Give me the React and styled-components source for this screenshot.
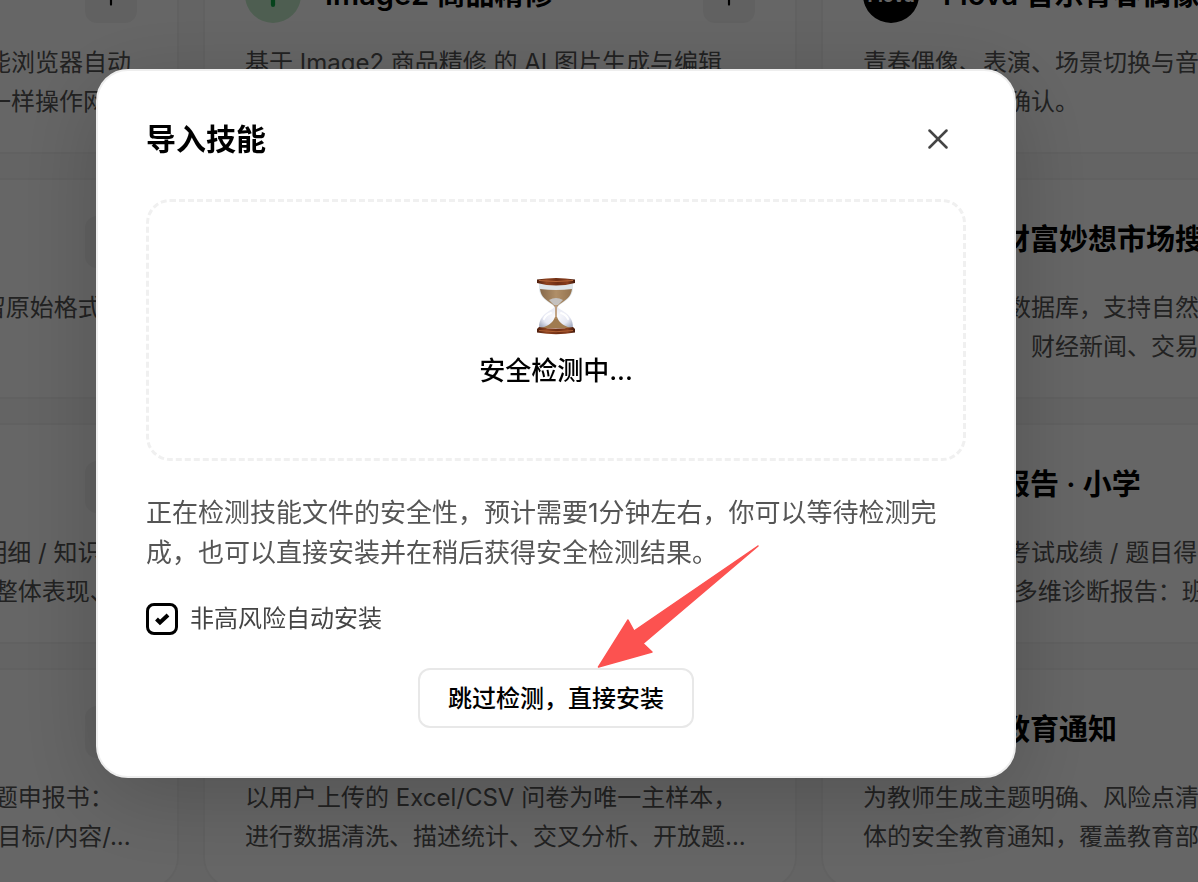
import React, { useState } from "react";
import styled, { createGlobalStyle } from "styled-components";
import { ArrowUp, Plus, X } from "lucide-react";

const skills = [
    {
        name: "浏览器自动化",
        lines: ["面向日常办公场景所提供的一套智能浏览器自动", "化操作，让助手可以像真人用户们一样操作网页"],
    },
    {
        name: "Image2 商品精修",
        badge: "arrow",
        lines: ["基于 Image2 商品精修 的 AI 图片生成与编辑", "支持商品主图与细节图"],
    },
    {
        name: "Flova 音乐青春偶像唱跳",
        badge: "flova",
        lines: ["青春偶像、表演、场景切换与音乐氛围的智能", "创作分镜逐一确认。"],
    },
    {
        name: "文档翻译",
        lines: ["将 DOC 文档翻译为目标语言并保留原始格式"],
    },
    {
        name: "数据整理",
        lines: ["整理表格数据"],
    },
    {
        name: "东方财富妙想市场搜索",
        lines: ["基于东方财富数据库，支持自然语言查询行情", "与研报公告等，财经新闻、交易数据等内容"],
    },
    {
        name: "学情报告 · 中学",
        lines: ["上传每次考试成绩 / 各题目得分 / 明细 / 知识", "点等，生成多维诊断的学情报告： 整体表现、"],
    },
    {
        name: "课堂设计",
        lines: ["生成课堂教学设计"],
    },
    {
        name: "学情报告 · 小学",
        lines: ["上传全班级的考试成绩 / 题目得分 / 知识点", "一键输出学情 多维诊断报告：班级整体表现"],
    },
    {
        name: "课题申报",
        lines: ["面向教师的课题研究， 生成完整课题申报书：", "选题依据/研究综述/研究方法/研究/目标/内容/..."],
    },
    {
        name: "问卷分析",
        lines: ["以用户上传的 Excel/CSV 问卷为唯一主样本，", "进行数据清洗、描述统计、交叉分析、开放题..."],
    },
    {
        name: "安全教育通知",
        lines: ["为教师生成主题明确、风险点清晰、措施具", "体的安全教育通知，覆盖教育部要求的内容"],
    },
];

function Badge({ kind }) {
    if (kind === "arrow") {
        return (
            <BadgeCircle $bg="#c4eccb">
                <ArrowUp size={34} strokeWidth={3} color="#10a848" />
            </BadgeCircle>
        );
    }
    if (kind === "flova") {
        return <BadgeCircle $bg="#000">Flova</BadgeCircle>;
    }
    return <BadgeCircle $bg="#e8eefc" />;
}

function SkillCard({ skill }) {
    return (
        <Card>
            <CardHeader>
                <Badge kind={skill.badge} />
                <CardTitle>{skill.name}</CardTitle>
                <AddButton aria-label={`添加 ${skill.name}`}>
                    <Plus size={26} strokeWidth={2} />
                </AddButton>
            </CardHeader>
            <CardText>
                {skill.lines.map((line) => (
                    <span key={line}>{line}</span>
                ))}
            </CardText>
        </Card>
    );
}

function Hourglass() {
    return (
        <svg width="64" height="64" viewBox="0 0 64 64" aria-hidden="true">
            <defs>
                <linearGradient id="wood" x1="0" x2="1" y1="0" y2="0">
                    <stop offset="0" stopColor="#4e1e0d" />
                    <stop offset="0.25" stopColor="#8f4420" />
                    <stop offset="0.55" stopColor="#6f2e14" />
                    <stop offset="0.8" stopColor="#8a3f1e" />
                    <stop offset="1" stopColor="#42180a" />
                </linearGradient>
                <linearGradient id="sand" x1="0" x2="1" y1="0" y2="0">
                    <stop offset="0" stopColor="#86684a" />
                    <stop offset="0.5" stopColor="#b08f68" />
                    <stop offset="1" stopColor="#94734f" />
                </linearGradient>
                <radialGradient id="glass" cx="0.5" cy="0.5" r="0.6">
                    <stop offset="0" stopColor="#fbfbfe" />
                    <stop offset="0.65" stopColor="#e6e8f3" />
                    <stop offset="1" stopColor="#a9b0c4" />
                </radialGradient>
            </defs>
            <path d="M15 12h34v5c0 8-6 12-12 16-3 2-4 3-4 6h-2c0-3-1-4-4-6-6-4-12-8-12-16z" fill="#dfe6ea" />
            <path d="M16 18q16 2 32 0c-1 8-6 11-12 15-2 1-3 3-3 6h-2c0-3-1-5-3-6-6-4-11-7-12-15z" fill="url(#sand)" />
            <path d="M25 29q7-4 14 0l-5 5h-4z" fill="#c9cbd0" opacity="0.85" />
            <path d="M31 34h2c0 3 3 4 6 6 6 4 10 8 10 17H15c0-9 4-13 10-17 3-2 6-3 6-6z" fill="url(#glass)" />
            <path d="M31 46h2c2 6 7 9 14 11H17c7-2 12-5 14-11z" fill="#a07b50" />
            <path d="M32 34v14" stroke="#b08a60" strokeWidth="1.500" />
            <path d="M20 48c1-3 4-5 7-6M44 48c-1-3-4-5-7-6" stroke="#fff" strokeWidth="2" fill="none" strokeLinecap="round" />
            <path d="M13 8.500q19-3 38 0v3.500q-19 5-38 0z" fill="url(#wood)" />
            <path d="M15 9.500q17 2 34 0" stroke="#b8683a" strokeWidth="1" fill="none" />
            <path d="M15 56q17 3 34 0l2 2v3.500q-19 3.500-38 0V58z" fill="url(#wood)" />
            <path d="M15 59.500q17 2.500 34 0" stroke="#b06034" strokeWidth="1" fill="none" />
        </svg>
    );
}

function ImportDialog() {
    const [autoInstall, setAutoInstall] = useState(true);

    return (
        <Dialog role="dialog" aria-modal="true" aria-labelledby="import-title">
            <DialogHeader>
                <DialogTitle id="import-title">导入技能</DialogTitle>
                <CloseButton aria-label="关闭">
                    <X size={34} strokeWidth={1.8} />
                </CloseButton>
            </DialogHeader>
            <DropZone>
                <Hourglass />
                <Status>安全检测中...</Status>
            </DropZone>
            <Notice>
                正在检测技能文件的安全性，预计需要1分钟左右，你可以等待检测完成，也可以直接安装并在稍后获得安全检测结果。
            </Notice>
            <Option>
                <Checkbox
                    type="checkbox"
                    checked={autoInstall}
                    onChange={(e) => setAutoInstall(e.target.checked)}
                />
                非高风险自动安装
            </Option>
            <Actions>
                <SkipButton>跳过检测，直接安装</SkipButton>
                <Pointer viewBox="0 0 162 124" aria-hidden="true">
                    <path
                        d="M161 1 37 86 31 75 1.500 122 55 107 46 98.500Z"
                        fill="#fc5250"
                        stroke="#fc5250"
                        strokeWidth="1.500"
                        strokeLinejoin="round"
                    />
                </Pointer>
            </Actions>
        </Dialog>
    );
}

function App() {
    return (
        <>
            <GlobalStyle />
            <Page>
                <Board>
                    {skills.map((skill, index) => (
                        <SkillCard skill={skill} key={index} />
                    ))}
                </Board>
            </Page>
            <Backdrop>
                <ImportDialog />
            </Backdrop>
        </>
    );
}

const GlobalStyle = createGlobalStyle`
    * {
        box-sizing: border-box;
    }
    body {
        margin: 0;
        background: #f9f9f9;
        color: #000;
        font-family: Inter, "Noto Sans CJK SC", sans-serif;
    }
    button {
        font-family: inherit;
        cursor: pointer;
    }
    h1, h2, p {
        margin: 0;
    }
`;

const Page = styled.main`
    height: 100vh;
    overflow: hidden;
`;

/* the board is scrolled towards its middle column */
const Board = styled.div`
    display: grid;
    grid-template-columns: repeat(3, 594px);
    grid-auto-rows: 221px;
    gap: 24px;
    margin: -67px 0 0 -415px;
`;

const Card = styled.article`
    background: #fff;
    border: 2px solid #f3f3f3;
    border-radius: 32px;
    padding: 32px 40px;
    overflow: hidden;
`;

const CardHeader = styled.div`
    display: flex;
    align-items: center;
    gap: 24px;
    height: 56px;
`;

const BadgeCircle = styled.div`
    flex: none;
    display: flex;
    align-items: center;
    justify-content: center;
    width: 56px;
    height: 56px;
    border-radius: 50%;
    background: ${(props) => props.$bg};
    color: #fff;
    font-size: 18px;
    font-weight: 700;
`;

const CardTitle = styled.h2`
    flex: 1;
    font-size: 29px;
    line-height: 40px;
    font-weight: 600;
    white-space: nowrap;
    overflow: hidden;
`;

const AddButton = styled.button`
    flex: none;
    align-self: flex-end;
    display: flex;
    align-items: center;
    justify-content: center;
    width: 52px;
    height: 52px;
    padding: 0;
    border: none;
    border-radius: 12px;
    background: #f3f3f3;
`;

const CardText = styled.p`
    display: flex;
    flex-direction: column;
    margin-top: 20px;
    font-size: 24px;
    line-height: 39px;
    color: #555;
    white-space: nowrap;
`;

const Backdrop = styled.div`
    position: fixed;
    inset: 0;
    display: flex;
    align-items: flex-start;
    justify-content: center;
    padding: 69px 182px 0 96px;
    background: rgba(0, 0, 0, 0.6);
`;

const Dialog = styled.section`
    width: 100%;
    max-width: 920px;
    padding: 40px 48px 48px;
    background: #fff;
    border: 2px solid #eee;
    border-radius: 32px;
    box-shadow: 0 20px 90px rgba(0, 0, 0, 0.2);
`;

const DialogHeader = styled.header`
    display: flex;
    align-items: center;
    justify-content: space-between;
    height: 56px;
`;

const DialogTitle = styled.h1`
    font-size: 30px;
    line-height: 40px;
    font-weight: 600;
`;

const CloseButton = styled.button`
    display: flex;
    align-items: center;
    justify-content: center;
    width: 56px;
    height: 56px;
    padding: 0;
    border: none;
    background: none;
    color: #444;
`;

const DropZone = styled.div`
    display: flex;
    flex-direction: column;
    align-items: center;
    justify-content: center;
    gap: 18px;
    height: 262px;
    margin-top: 32px;
    border: 3px dashed #f0f0f0;
    border-radius: 24px;
`;

const Status = styled.p`
    font-size: 26px;
    line-height: 36px;
    font-weight: 500;
`;

const Notice = styled.p`
    margin-top: 32px;
    padding-right: 16px;
    font-size: 26px;
    line-height: 40px;
    color: #555;
`;

const Option = styled.label`
    display: flex;
    align-items: center;
    gap: 12px;
    width: fit-content;
    margin-top: 30px;
    font-size: 24px;
    line-height: 32px;
    color: #444;
    cursor: pointer;
`;

const Checkbox = styled.input`
    appearance: none;
    width: 32px;
    height: 32px;
    margin: 0;
    border: 3px solid #000;
    border-radius: 8px;
    background: #fff;

    &:checked {
        background: #fff
            url("data:image/svg+xml,%3Csvg xmlns='http://www.w3.org/2000/svg' viewBox='0 0 26 26'%3E%3Cpath d='M7.500 13l3.500 3.500 8-7.500' fill='none' stroke='black' stroke-width='4'/%3E%3C/svg%3E")
            center / 26px no-repeat;
    }
`;

const Actions = styled.div`
    position: relative;
    width: 276px;
    margin: 33px auto 0;
`;

const SkipButton = styled.button`
    width: 100%;
    height: 60px;
    padding: 0 0 4px;
    border: 2px solid #e8e8e8;
    border-radius: 12px;
    background: #fff;
    color: #000;
    font-size: 24px;
    font-weight: 500;
`;

const Pointer = styled.svg`
    position: absolute;
    left: 179px;
    bottom: 59px;
    width: 162px;
    height: 124px;
    pointer-events: none;
`;

export default App;
